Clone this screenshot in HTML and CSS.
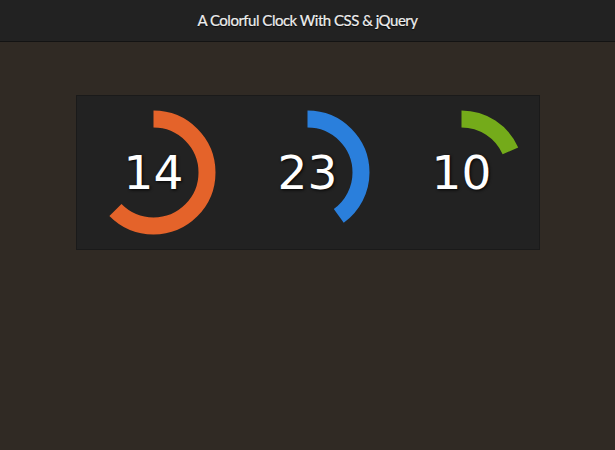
FILE: index.html
```html
<!DOCTYPE html>
<html lang="en">
<head>
  <meta charset="UTF-8">
  <title>A Colorful Clock With CSS &amp; jQuery</title>
  <link rel="stylesheet" href="styles.css">
</head>
<body>
  <header class="top">A Colorful Clock With CSS &amp; jQuery</header>

  <div class="reloj">
    <div class="dial">
      <svg viewBox="0 0 125 125" class="anillo">
        <circle cx="62.5" cy="62.5" r="53.5" class="arco orange" stroke-dasharray="210.09 400"></circle>
      </svg>
      <span class="num">14</span>
    </div>
    <div class="dial">
      <svg viewBox="0 0 125 125" class="anillo">
        <circle cx="62.5" cy="62.5" r="53.5" class="arco blue" stroke-dasharray="134.46 400"></circle>
      </svg>
      <span class="num">23</span>
    </div>
    <div class="dial">
      <svg viewBox="0 0 125 125" class="anillo">
        <circle cx="62.5" cy="62.5" r="53.5" class="arco green" stroke-dasharray="61.63 400"></circle>
      </svg>
      <span class="num">10</span>
    </div>
  </div>
</body>
</html>
```

FILE: styles.css
```css
body {
  margin: 0;
  background: #302a24;
  font-family: "DejaVu Sans", sans-serif;
}
.top {
  height: 41px;
  line-height: 41px;
  background: #222222;
  border-bottom: 1px solid #131313;
  color: #eeeeee;
  text-align: center;
  font-family: Lato, sans-serif;
  font-size: 15px;
  letter-spacing: -0.5px;
  text-shadow: 0 1px 1px rgba(0, 0, 0, 0.8);
  -webkit-text-stroke: 0.2px #eeeeee;
}
.reloj {
  width: 462px;
  margin: 53px auto 0;
  background: #222222;
  border: 1px solid #1a1a1a;
  display: flex;
}
.dial {
  width: 154px;
  height: 153px;
  display: grid;
  place-items: center;
}
.anillo,
.num {
  grid-area: 1 / 1;
}
.anillo {
  width: 125px;
  height: 125px;
  transform: rotate(-90deg);
}
.arco {
  fill: none;
  stroke-width: 17;
}
.orange { stroke: #e4632a; }
.blue { stroke: #2a7fdc; }
.green { stroke: #74ab1a; }
.num {
  color: #ffffff;
  font-size: 47px;
  text-shadow: 1px 1px 3px rgba(0, 0, 0, 0.9);
}
```
